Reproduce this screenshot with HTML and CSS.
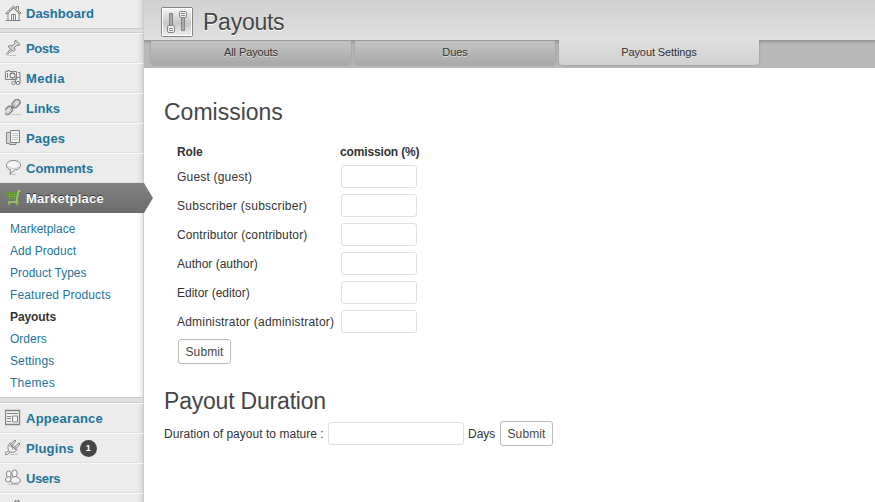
FILE: index.html
```html
<!DOCTYPE html>
<html lang="en">
<head>
<meta charset="utf-8">
<title>Payouts</title>
<link rel="stylesheet" href="styles.css">
</head>
<body>
<aside class="sidebar">
  <nav>
    <a class="item first"><svg class="icon" viewBox="0 0 18 18"><path class="fill" d="M3 9 9 3.500 14 9v7.500H3z"/><path d="M.5 9.500 8.500 2l3 2.500V2.500h2v4l2.500 3M.5 9.500h2l6-5.500 5.500 5.500h2"/><path d="M6.500 16v-5.500h4V16M8.500 11v5M.5 16.500h15"/></svg><span>Dashboard</span></a>
    <div class="sep"></div>
    <a class="item"><svg class="icon" viewBox="0 0 18 18"><path class="soft" d="m9.500 3.500 1-2.500 4.500 4.500-2 1-1-.3-2.500 2.500.5 2.500-1.500 1.500L3 7.500l1.500-1 2.500.5 2.500-2.300z"/><path d="m5.500 10-4.500 5.500M7 11.500 2.500 15"/><path class="light" d="M2 16.500h9"/></svg><span class="tight">Posts</span></a>
    <a class="item"><svg class="icon" viewBox="0 0 18 18"><path class="fill" d="M.5 2.500h2v-1h2v1h7v8H.5z"/><circle class="heavy" cx="7.500" cy="6.500" r="2.500"/><path d="M2.500 4v5M13 3.500h2v11M10.500 14V9l4.500-1"/><circle class="fill" cx="8.500" cy="14" r="1.700"/><circle class="fill" cx="13" cy="14" r="1.700"/></svg><span class="w4">Media</span></a>
    <a class="item"><svg class="icon" viewBox="0 0 18 18"><g transform="translate(-1 -1)"><rect class="soft heavy" x="7.500" y="2.500" width="9" height="6" rx="3" transform="rotate(-45 12 5.500)"/><rect class="soft heavy" x="0" y="9.500" width="9" height="6" rx="3" transform="rotate(-45 4.500 12.500)"/><path class="bright" d="m10 8 3.500-3.500M3.500 13.500 7 10"/><path d="m6.500 11.500 4.500-5"/><path class="light" d="M8 16.500h9"/></g></svg><span>Links</span></a>
    <a class="item"><svg class="icon" viewBox="0 0 18 18"><path class="soft" d="M6 3.500H1.500v11h3v1H11V4z"/><path class="fill" d="M5.500 1.500h9v12h-9z"/><path class="light" d="M7 4.500h6M7 6.500h6M7 8.500h6M7 10.500h6"/></svg><span class="w2">Pages</span></a>
    <a class="item"><svg class="icon" viewBox="0 0 18 18"><path class="fill" d="M8.500 1.500c4 0 7 2 7 4.700s-2.500 4.600-6 4.800l-4.500 4 .5-4.300c-2.500-.5-4-2.200-4-4.500 0-2.700 3-4.700 7-4.700z"/><path class="light" d="M3 7c1 2 3 2.500 5.500 2.500S13 9 14 7M4 15.500h7"/></svg><span>Comments</span></a>
    <a class="item current"><svg class="icon cart" viewBox="0 0 18 18"><path class="basket" d="M.5 3.500h12l-1.500 6H3z"/><path class="rim" d="M15.500 2h-2l-2 9.500 1 1.500H3"/><path class="mesh" d="M1.500 5.500H12M2.500 7.500h9M4.500 4v5M7 4v5M9.500 4v5"/><circle cx="4" cy="15" r="1"/><circle cx="12" cy="15" r="1"/></svg><span class="w3">Marketplace</span></a>
    <div class="submenu">
      <a>Marketplace</a><a>Add Product</a><a>Product Types</a><a class="w1">Featured Products</a><a class="on">Payouts</a><a>Orders</a><a class="w1">Settings</a><a class="w3">Themes</a>
    </div>
    <div class="sep lower"></div>
    <a class="item"><svg class="icon" viewBox="0 0 18 18"><path class="fill heavy" d="M.5 1.500h14v14H.5z"/><path d="M2 4.500h11M7.500 7h5v6h-5zM2 7.500h4M2 9.500h4M2 12.500h4"/></svg><span class="w3">Appearance</span></a>
    <a class="item"><svg class="icon" viewBox="0 0 18 18"><path class="fill" d="m4.500 4.500 7 7c-2 2-5 2.500-7 1s-2-6 0-8z"/><path d="m6 4.500 4-3.500 1 1-3.500 4M9.500 8l4.500-4 1 1-4 4.500M5 3.500l7.500 7.500M3.500 12 0 14v1.500h2.500l2.500-2.500M4.500 7c2 0 3.500 2 3.500 4"/><path class="light" d="M5 15.500h8"/></svg><span class="w1">Plugins</span><b class="badge">1</b></a>
    <a class="item"><svg class="icon" viewBox="0 0 18 18"><rect class="fill" x="1.500" y="2" width="4.500" height="6.500" rx="2.200"/><rect class="fill" x="7" y="1" width="5" height="7" rx="2.500"/><path class="fill" d="M.5 11c0-3 2-3.500 4-3 1.500.5 2 1.500 1.500 4-2 1.500-5 1-5.500-1z"/><path class="fill" d="M5.500 12c0-3 2.500-4.500 4.500-4.500s5.500 2 5.500 4.500-10 4-10 0z"/><path class="light" d="M3 15.500h11"/></svg><span class="tight">Users</span></a>
    <a class="item"><svg class="icon" viewBox="0 0 18 18"><path class="soft" d="M3 3.500h5v3H6v8H4v-8H2zM11 1v4h2V1l2 2v4l-2 1v6h-2V8L9 7V3z"/></svg></a>
  </nav>
</aside>
<main class="main">
  <header class="head">
    <div class="title">
      <svg class="logo" viewBox="0 0 32 30"><defs><linearGradient id="g" x2="0" y2="1"><stop stop-color="#f7f7f7"/><stop offset=".55" stop-color="#c8c8c8"/><stop offset="1" stop-color="#f1f1f1"/></linearGradient></defs><rect x=".5" y=".5" width="31" height="29" rx="1.500" fill="url(#g)" stroke="#858585"/><rect x="1.500" y="1.500" width="29" height="27" fill="none" stroke="#fff"/><g stroke="#858585"><path fill="#aaa" d="M8.500 6.500h3v13h-3zM20.500 10.500h3v13h-3z"/><rect x="6.500" y="18.500" width="7" height="7" rx="1.500" fill="#f3f3f3"/><rect x="18.500" y="4.500" width="7" height="6" rx="1.500" fill="#f3f3f3"/><path d="M8 21.500h4M8 23.500h4M20 6.500h4M20 8.500h4"/></g></svg>
      <h1>Payouts</h1>
    </div>
    <div class="tabs"><a class="tab">All Payouts</a><a class="tab">Dues</a><a class="tab active">Payout Settings</a></div>
  </header>
  <section class="content">
    <h2>Comissions</h2>
    <form class="roles">
      <div class="row th"><span>Role</span><span>comission (%)</span></div>
      <div class="row"><label class="w2">Guest (guest)</label><input type="text"></div>
      <div class="row"><label class="w3">Subscriber (subscriber)</label><input type="text"></div>
      <div class="row"><label class="w1">Contributor (contributor)</label><input type="text"></div>
      <div class="row"><label>Author (author)</label><input type="text"></div>
      <div class="row"><label>Editor (editor)</label><input type="text"></div>
      <div class="row"><label class="w2">Administrator (administrator)</label><input type="text"></div>
      <button type="button">Submit</button>
    </form>
    <h2 class="second">Payout Duration</h2>
    <form class="duration"><label>Duration of payout to mature :</label><input type="text"><span class="days">Days</span><button type="button">Submit</button></form>
  </section>
</main>
</body>
</html>
```
FILE: styles.css
```css
* { box-sizing: border-box; }
body {
  margin: 0;
  height: 502px;
  overflow: hidden;
  display: flex;
  background: #fff;
  color: #333;
  font: 12px/16px "Liberation Sans", Arial, sans-serif;
}
/* tracking steps */
.tight { letter-spacing: -.4px; }
.w1 { letter-spacing: .12px; }
.w2 { letter-spacing: .2px; }
.w3 { letter-spacing: .27px; }
.w4 { letter-spacing: .4px; }
.sidebar {
  width: 144px;
  height: 502px;
  flex: none;
  overflow: hidden;
  background: #ececec;
  border-right: 1px solid #ccc;
  box-shadow: inset -6px 0 6px -6px rgba(0, 0, 0, .2);
}
.item {
  display: flex;
  align-items: center;
  height: 30px;
  padding: 2px 0 0 5px;
  border-top: 1px solid #f9f9f9;
  border-bottom: 1px solid #dfdfdf;
  color: #21759b;
  font-size: 13px;
  font-weight: bold;
}
.first { margin-top: -2px; padding-top: 0; border-bottom: 0; }
.icon {
  width: 18px;
  height: 18px;
  margin: -2px 3px 0 0;
  fill: none;
  stroke: #828282;
  stroke-width: 1;
}
.icon .fill { fill: #f4f4f4; }
.icon .soft { fill: #d5d5d5; }
.icon .light { stroke: #c4c4c4; }
.icon .bright { stroke: #f4f4f4; }
.icon .heavy { stroke-width: 1.3; }
.sep {
  height: 5px;
  background: #dfdfdf;
  border-top: 1px solid #c8c8c8;
  border-bottom: 1px solid #ccc;
}
.lower { height: 6px; }
.current {
  width: 144px;
  border-color: #808080 #808080 #6d6d6d;
  background: linear-gradient(#808080, #6d6d6d);
  color: #fff;
  text-shadow: 0 -1px 0 #333;
}
.cart { stroke: #8fbd50; }
.cart .basket { fill: #4f7a24; stroke: #6f9d3a; }
.cart .rim { stroke: #a3cf66; stroke-width: 1.5; }
.cart .mesh { stroke: #8db857; stroke-width: .7; }
.submenu {
  height: 184px;
  padding: 5px 0 0 10px;
  background: #fff;
  box-shadow: inset -6px 0 6px -6px rgba(0, 0, 0, .2);
}
.submenu a {
  display: block;
  height: 22px;
  line-height: 22px;
  color: #21759b;
}
.submenu .on { color: #333; font-weight: bold; letter-spacing: -.1px; }
.badge {
  width: 17px;
  height: 17px;
  margin: -1px 0 0 6px;
  border-radius: 50%;
  background: #464646;
  color: #fff;
  font-size: 9px;
  line-height: 17px;
  text-align: center;
}
.main { flex: 1; position: relative; }
.main::before {
  content: "";
  position: absolute;
  left: -1px;
  top: 183px;
  z-index: 2;
  width: 10px;
  height: 30px;
  background: linear-gradient(#808080, #6d6d6d);
  clip-path: polygon(0 0, 1px 0, 100% 50%, 1px 100%, 0 100%);
}
.head { height: 68px; background: #b9b9b9; }
.title {
  height: 41px;
  display: flex;
  padding: 7px 0 0 17px;
  background: linear-gradient(#d1d1d1, #dfdfdf);
  border-bottom: 1px solid #999;
}
.logo { width: 32px; height: 30px; margin-right: 10px; }
h1, h2 {
  margin: 0;
  color: #464646;
  font-size: 23px;
  font-weight: normal;
  line-height: 29px;
}
h1 { padding-top: 1px; letter-spacing: -.25px; text-shadow: 0 1px 0 #fff; }
.tabs {
  display: flex;
  gap: 4px;
  height: 27px;
  padding-left: 7px;
  box-shadow: inset 0 3px 3px -2px rgba(0, 0, 0, .2);
}
.tab {
  width: 200px;
  height: 24px;
  background: linear-gradient(#c4c4c4, #a8a8a8);
  border-radius: 0 0 4px 4px;
  box-shadow: 0 0 2px 1px rgba(0, 0, 0, .1);
  clip-path: inset(0 -4px -4px);
  font-size: 11px;
  line-height: 22px;
  text-align: center;
  text-shadow: 0 1px 0 #ddd;
  letter-spacing: -.1px;
}
.active {
  height: 25px;
  margin-top: -1px;
  line-height: 24px;
  background: linear-gradient(#dfdfdf, #d1d1d1);
}
.content { padding: 30px 0 0 20px; }
.roles { padding: 16px 0 0 13px; }
.row {
  display: grid;
  grid-template-columns: 164px auto;
  align-items: center;
  justify-content: start;
  height: 29px;
}
.th { height: 18px; margin-bottom: 1px; font-weight: bold; letter-spacing: -.15px; }
.th span + span { margin-left: -1px; }
input {
  width: 76px;
  height: 23px;
  padding: 0;
  border: 1px solid #dfdfdf;
  border-radius: 3px;
  background: #fff;
}
button {
  display: block;
  width: 53px;
  height: 25px;
  margin: 3px 0 0 1px;
  padding: 0;
  border: 1px solid #bbb;
  border-radius: 3px;
  background: #fff;
  color: #464646;
  font: 12px "Liberation Sans", Arial, sans-serif;
  letter-spacing: .1px;
}
.second { margin-top: 23px; letter-spacing: -.2px; }
.duration { display: flex; align-items: center; margin-top: 5px; }
.duration label { width: 164px; white-space: nowrap; letter-spacing: .03px; }
.duration input { width: 136px; }
.duration .days { width: 32px; padding-left: 4px; }
.duration button { margin: 0 0 0 4px; }
```
